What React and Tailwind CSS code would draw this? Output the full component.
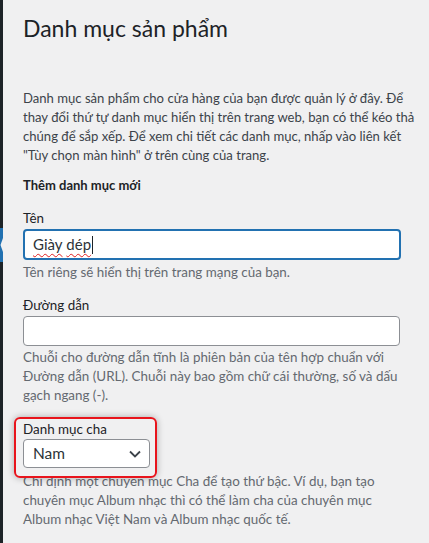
import React from "react";

function AdminEdge() {
  return (
    <div className="w-[3px] shrink-0 bg-[#1d2327] flex flex-col">
      <div className="h-[228px]" />
      <svg width="3" height="34" viewBox="0 0 3 34" className="block">
        <rect width="3" height="34" fill="#2271b1" />
        <polygon points="3,10 0.5,17 3,24" fill="#f0f0f1" />
      </svg>
    </div>
  );
}

function Field({ label, children, hint, className = "" }) {
  return (
    <div className={className}>
      <label className="block text-[13.4px] leading-[19px] text-[#1d2327]">{label}</label>
      {children}
      {hint}
    </div>
  );
}

export default function App() {
  const font = { fontFamily: 'Lato, "Noto Sans", sans-serif' };

  return (
    <div className="flex min-h-[543px] w-[429px] bg-[#f0f0f1] overflow-hidden" style={font}>
      <AdminEdge />
      <div className="relative flex-1 pl-[20px]">
        <h1 className="pt-[13px] text-[23px] leading-[30px] font-normal text-[#1d2327]">
          Danh mục sản phẩm
        </h1>

        <p className="mt-[46px] w-[406px] text-[13.1px] leading-[19px] text-[#3c434a]">
          Danh mục sản phẩm cho cửa hàng của bạn được quản lý ở đây. Để
          <br />
          thay đổi thứ tự danh mục hiển thị trên trang web, bạn có thể kéo thả
          <br />
          chúng để sắp xếp. Để xem chi tiết các danh mục, nhấp vào liên kết
          <br />
          "Tùy chọn màn hình" ở trên cùng của trang.
        </p>

        <h2 className="mt-[11px] text-[13px] leading-[19px] font-bold text-[#1d2327]">Thêm danh mục mới</h2>

        <Field
          className="mt-[14px]"
          label="Tên"
          hint={
            <p className="mt-[3px] w-[378px] text-[13.4px] leading-[19px] text-[#646970]">
              Tên riêng sẽ hiển thị trên trang mạng của bạn.
            </p>
          }
        >
          <div className="mt-[1px] flex h-[31px] w-[378px] items-center rounded-[4px] border-2 border-[#2271b1] bg-white px-[8px] text-[15px] text-[#2c3338]">
            <span className="underline decoration-wavy decoration-[#e02020] decoration-1 underline-offset-[3px]">Giày</span>
            <span>&nbsp;</span>
            <span className="underline decoration-wavy decoration-[#e02020] decoration-1 underline-offset-[3px]">dép</span>
            <span className="ml-[1px] inline-block h-[18px] w-[1px] bg-[#1d2327]" />
          </div>
        </Field>

        <Field
          className="mt-[14px]"
          label="Đường dẫn"
          hint={
            <p className="mt-[2px] w-[378px] text-[13.4px] leading-[19px] text-[#646970]">
              Chuỗi cho đường dẫn tĩnh là phiên bản của tên hợp chuẩn với Đường dẫn (URL). Chuỗi này bao gồm chữ
              cái thường, số và dấu gạch ngang (-).
            </p>
          }
        >
          <div className="mt-[1px] h-[30px] w-[377px] rounded-[4px] border border-[#8c8f94] bg-white" />
        </Field>

        <Field
          className="mt-[15px]"
          label="Danh mục cha"
          hint={
            <p className="mt-[4px] w-[378px] text-[13.4px] leading-[19px] text-[#646970]">
              Chỉ định một chuyên mục Cha để tạo thứ bậc. Ví dụ, bạn tạo chuyên mục Album nhạc thì có thể làm cha
              của chuyên mục Album nhạc Việt Nam và Album nhạc quốc tế.
            </p>
          }
        >
          <div className="flex h-[29px] w-[127px] items-center justify-between rounded-[4px] border border-[#8c8f94] bg-white pl-[9px] pr-[8px] text-[15.5px] text-[#2c3338]">
            <span>Nam</span>
            <svg width="12" height="8" viewBox="0 0 12 8" fill="none">
              <path d="M1 1.5 L6 6.5 L11 1.5" stroke="#3c434a" strokeWidth="1.8" />
            </svg>
          </div>
        </Field>

        <div className="pointer-events-none absolute left-[11px] top-[417px] h-[61px] w-[143px] rounded-[6px] border-2 border-[#e8141c] shadow-[0_0_7px_rgba(0,0,0,0.3)]" />
      </div>
    </div>
  );
}
